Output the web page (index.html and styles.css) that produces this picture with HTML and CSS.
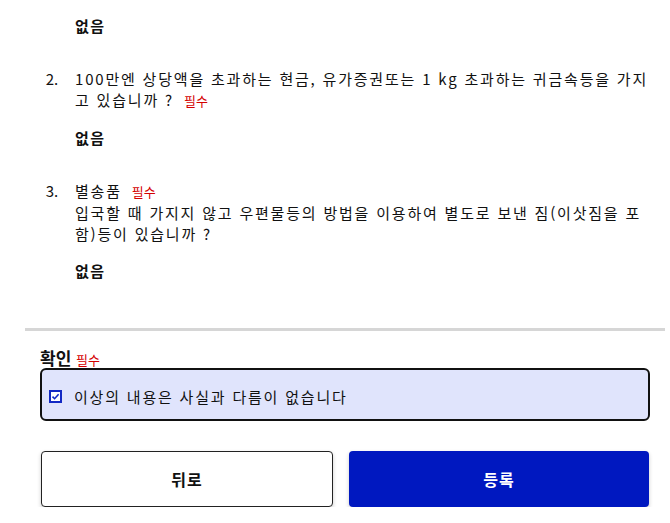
FILE: index.html
```html
<!DOCTYPE html>
<html lang="ko">
<head>
  <meta charset="UTF-8">
  <meta name="viewport" content="width=device-width, initial-scale=1.0">
  <title>휴대품 신고</title>
  <link rel="stylesheet" href="styles.css">
</head>
<body>
  <div class="page">
    <ol class="questions">
      <li class="question question-tail">
        <p class="answer">없음</p>
      </li>
      <li class="question" value="2">
        <div class="ask">100만엔 상당액을 초과하는 현금, 유가증권또는 1 kg 초과하는 귀금속등을 가지고 있습니까 ? <span class="required">필수</span></div>
        <p class="answer">없음</p>
      </li>
      <li class="question" value="3">
        <div class="ask">별송품 <span class="required">필수</span></div>
        <div class="ask-desc">입국할 때 가지지 않고 우편물등의 방법을 이용하여 별도로 보낸 짐(이삿짐을 포함)등이 있습니까 ?</div>
        <p class="answer">없음</p>
      </li>
    </ol>

    <section class="confirm">
      <h2 class="confirm-title">확인 <span class="required">필수</span></h2>
      <label class="confirm-box">
        <span class="check">
          <svg width="13" height="13" viewBox="0 0 13 13">
            <rect x="1" y="1" width="11" height="11" fill="#fff" stroke="#1228c4" stroke-width="2"/>
            <path d="M3.5 6.6 L5.6 8.7 L9.6 4.3" fill="none" stroke="#1228c4" stroke-width="1.6"/>
          </svg>
        </span>
        <span class="confirm-text">이상의 내용은 사실과 다름이 없습니다</span>
      </label>
      <div class="actions">
        <button class="btn btn-back">뒤로</button>
        <button class="btn btn-submit">등록</button>
      </div>
    </section>
  </div>
</body>
</html>
```

FILE: styles.css
```css
body {
  margin: 0;
  background-color: #fff;
  color: #111;
  font-family: "Noto Sans CJK KR", "Noto Sans", sans-serif;
  font-size: 15px;
}
.page {
  width: 640px;
  margin-left: 25px;
}
.questions {
  margin: 0;
  padding: 15px 14px 47px 50px;
}
.question {
  line-height: 21px;
  letter-spacing: 1.8px;
  margin-bottom: 32px;
}
.question:last-child {
  margin-bottom: 0;
}
.question::marker {
  content: counter(list-item) ".    ";
  letter-spacing: 0;
}
.question-tail::marker {
  content: none;
}
.answer {
  margin: 16px 0 0;
  font-weight: bold;
  letter-spacing: 1.5px;
}
.question-tail .answer {
  margin-top: 0;
}
.required {
  color: #d40000;
  font-size: 13px;
  letter-spacing: 0;
  margin-left: 4px;
}
.confirm {
  border-top: 3px solid #d6d6d6;
  padding: 17px 15px 0;
}
.confirm-title {
  height: 20px;
  margin: 0;
  font-size: 17px;
  line-height: 20px;
}
.confirm-title .required {
  font-weight: normal;
  margin-left: 0;
}
.confirm-box {
  display: flex;
  align-items: center;
  gap: 12px;
  padding: 16px 8px 12px 7px;
  border: 2px solid #111;
  border-radius: 6px;
  background-color: #e0e4fc;
  line-height: 21px;
  letter-spacing: 1.8px;
}
.check {
  display: flex;
}
.actions {
  display: grid;
  grid-template-columns: 292fr 300fr;
  gap: 16px;
  margin-top: 30px;
  padding: 0 1px;
}
.btn {
  height: 56px;
  font-family: inherit;
  font-size: 16px;
  font-weight: bold;
  letter-spacing: 1px;
  border-radius: 4px;
  cursor: pointer;
  box-shadow: 0 2px 4px rgba(0, 0, 0, 0.2);
}
.btn-back {
  background-color: #fff;
  color: #111;
  border: 1px solid #222;
}
.btn-submit {
  background-color: #0018c0;
  color: #fff;
  border: none;
}
```
